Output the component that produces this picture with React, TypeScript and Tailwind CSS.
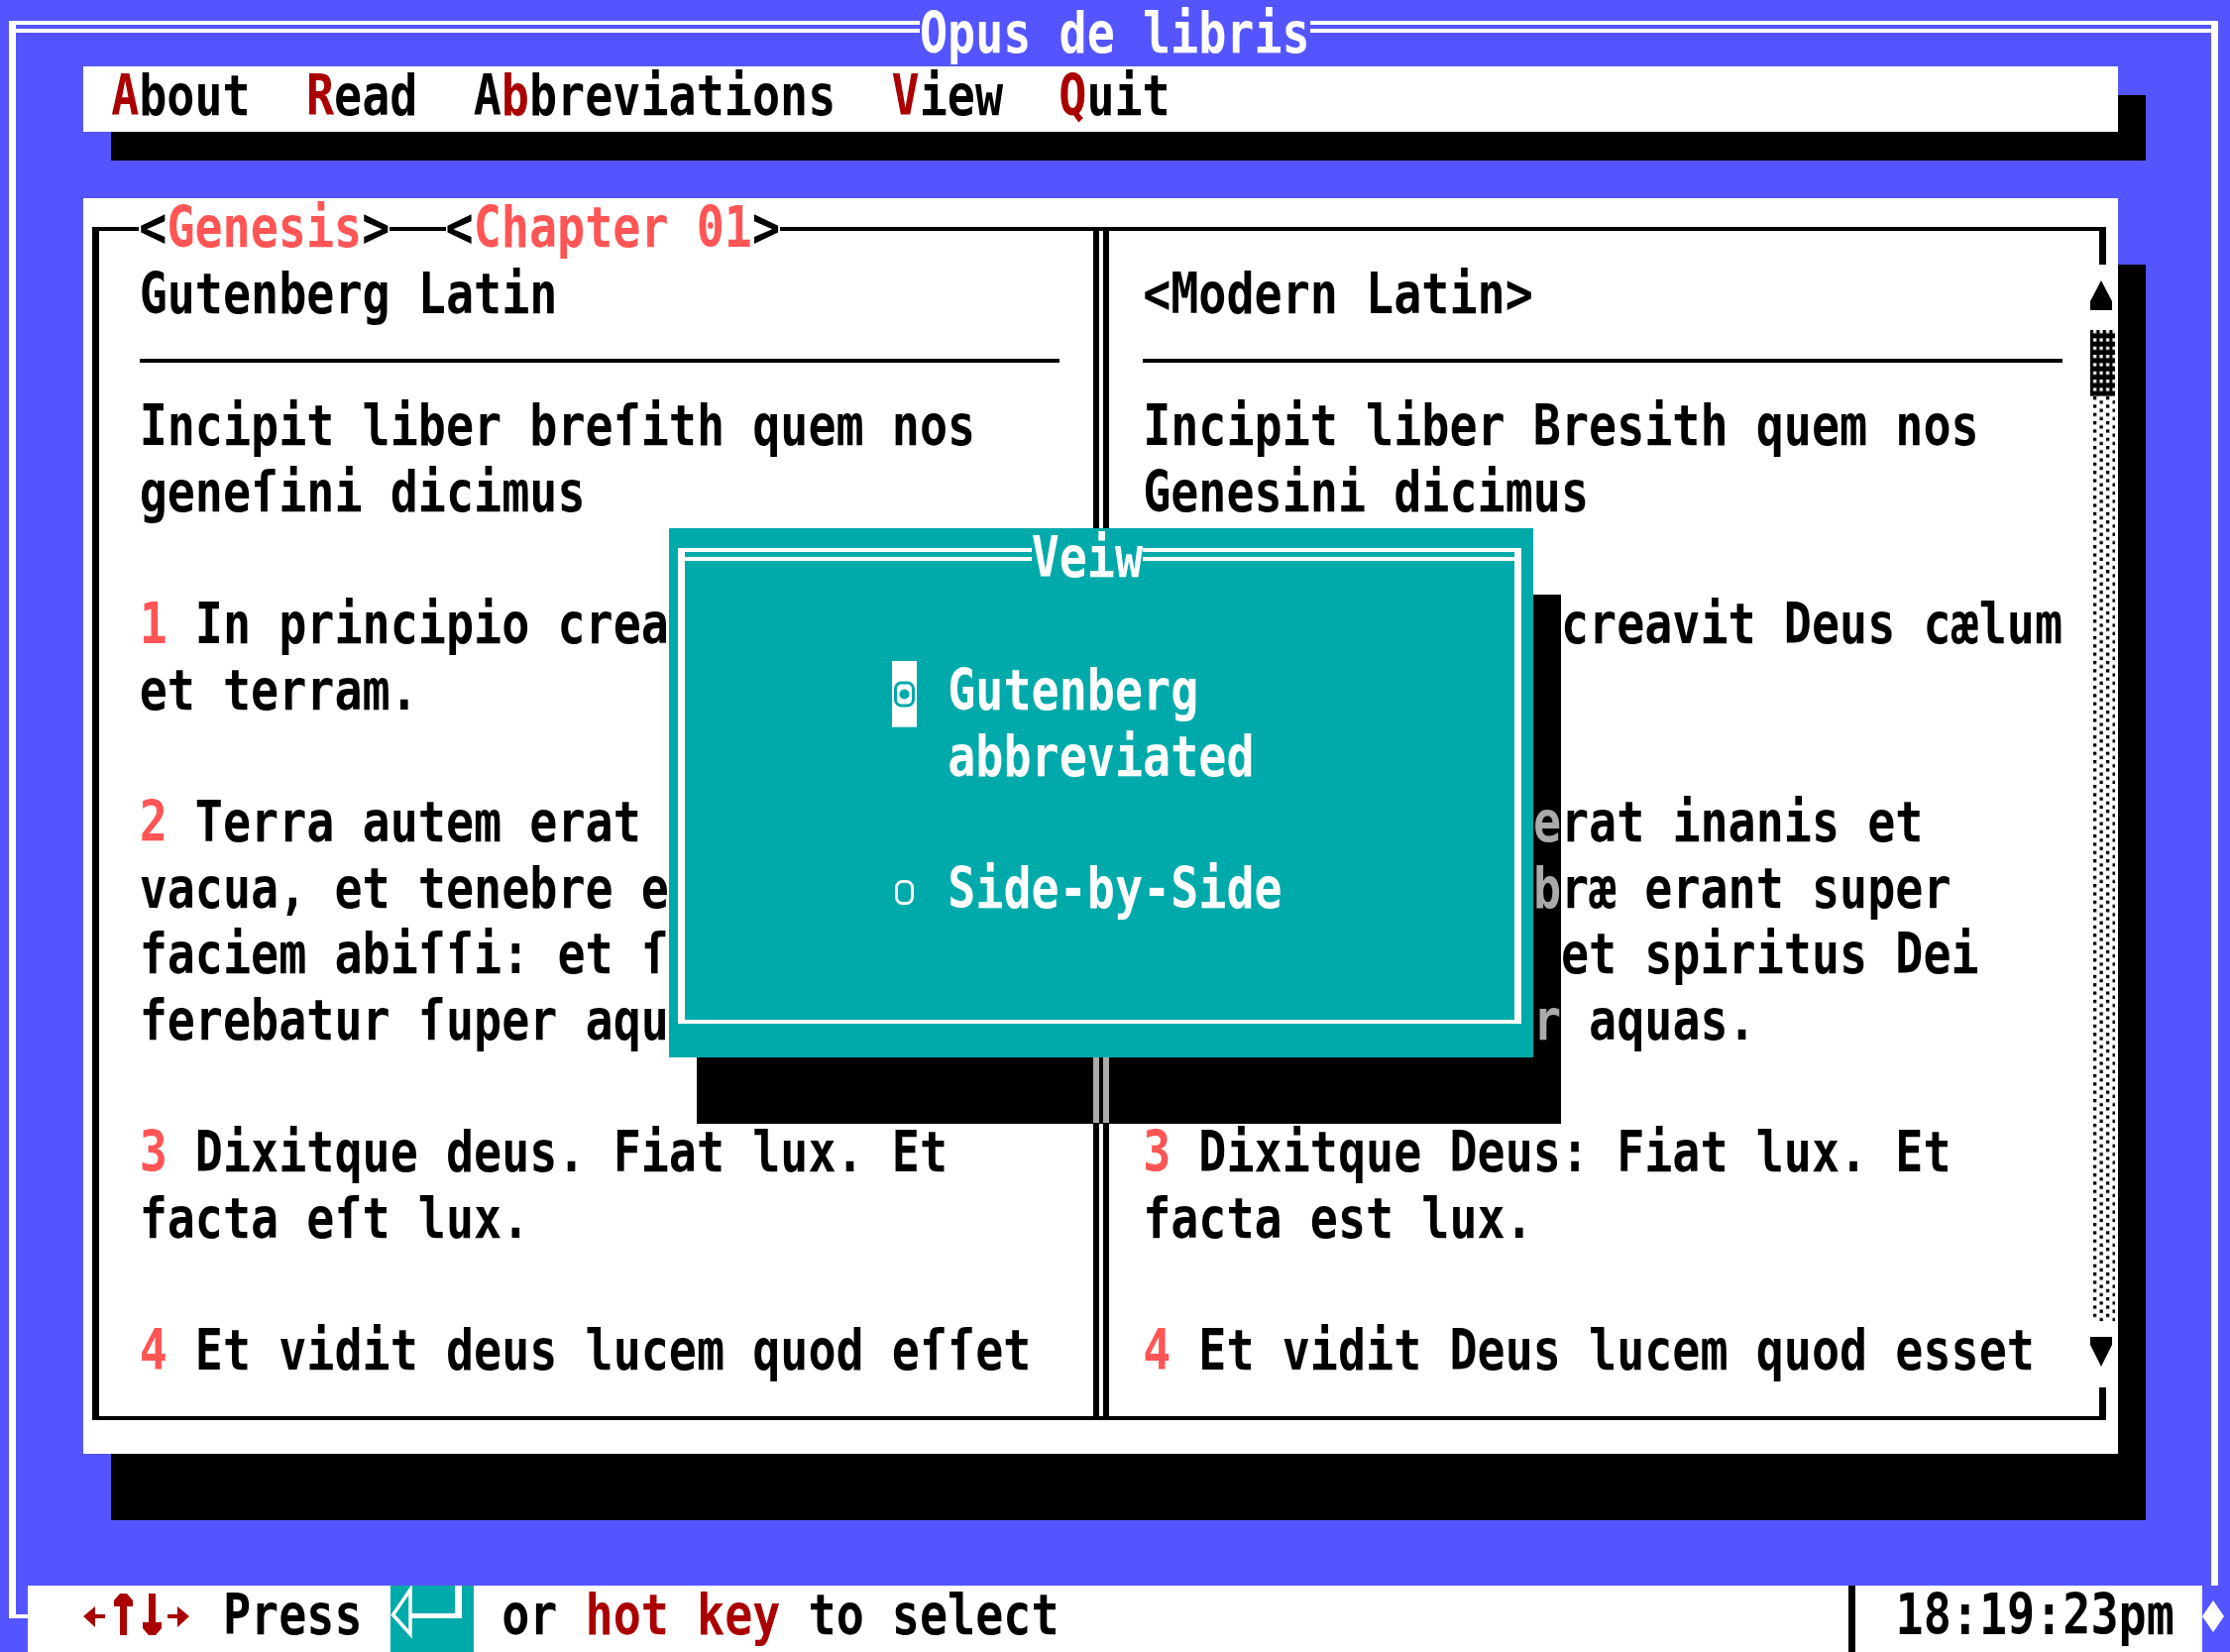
import type { ReactNode } from "react";

// DOS text-mode screen: 80x25 cells, each 28.125 x 66.68 px.

function Row({ children, className = "" }: { children?: ReactNode; className?: string }) {
  return (
    <div className={`h-[66.68px] whitespace-pre leading-[66.68px] ${className}`}>
      <span className="inline-block origin-[0_49.5px] scale-y-[1.2]">{children}</span>
    </div>
  );
}

function Verse({ n, text }: { n: string; text: string }) {
  return (
    <Row>
      <span className="text-[#ff5555]">{n}</span>
      {text}
    </Row>
  );
}

// a row whose 15th cell sits under the dialog shadow (drawn there in grey)
function Split({ before, after, n }: { before: string; after: string; n?: string }) {
  return (
    <div className="flex h-[66.68px]">
      <Row>
        {n && <span className="text-[#ff5555]">{n}</span>}
        {before}
      </Row>
      <div className="w-[28.125px] shrink-0" />
      <Row>{after}</Row>
    </div>
  );
}

function Rule() {
  return (
    <div className="h-[66.68px] pt-[28.3px]">
      <div className="w-[928.125px] border-t-4 border-black" />
    </div>
  );
}

function ScrollBar() {
  return (
    <div className="absolute left-[2025px] top-[66.68px] flex h-[1133.56px] w-[28.125px] flex-col bg-white">
      <svg className="h-[66.68px] w-[28.125px] shrink-0" viewBox="0 0 28.125 66.68">
        <polygon points="11,16 22,37 22,46 0,46 0,37" fill="black" />
      </svg>
      <svg className="h-[66.68px] w-[25px] shrink-0">
        <defs>
          <pattern id="thumb" width="6.5" height="8.34" patternUnits="userSpaceOnUse">
            <rect x="3" y="0" width="3.2" height="3.3" fill="white" />
          </pattern>
        </defs>
        <rect width="25" height="66.68" fill="black" />
        <rect width="25" height="66.68" fill="url(#thumb)" />
      </svg>
      <svg className="h-[933.52px] w-[25px] shrink-0">
        <defs>
          <pattern id="track" width="13" height="8.34" patternUnits="userSpaceOnUse">
            <rect x="3" y="0" width="3.3" height="3.3" fill="black" />
            <rect x="9.5" y="4.17" width="3.3" height="3.3" fill="black" />
          </pattern>
        </defs>
        <rect width="25" height="933.52" fill="url(#track)" />
      </svg>
      <svg className="h-[66.68px] w-[28.125px] shrink-0" viewBox="0 0 28.125 66.68">
        <polygon points="0,15 22,15 22,23 11,45 0,23" fill="black" />
      </svg>
    </div>
  );
}

export default function App() {
  return (
    <div className="relative h-[1667px] w-[2250px] overflow-hidden bg-[#5555ff] font-['DejaVu_Sans_Mono','Liberation_Mono',monospace] text-[46.715px] font-bold leading-[66.68px] text-black">
      {/* outer frame */}
      <div className="relative mt-[21px] mr-[12px] ml-[9px] h-[1579px] border-x-[7px] border-t-4 border-white">
        <div className="mt-[4px] border-t-4 border-white" />
        <div className="absolute top-[-21px] left-[912px] bg-[#5555ff] text-white">
          <Row>Opus de libris</Row>
        </div>

        {/* menu bar */}
        <div className="relative mt-[33.68px] ml-[68px] h-[66.68px] w-[2053px]">
          <div className="absolute top-[29px] left-[28px] h-full w-full bg-black" />
          <div className="relative h-full w-full bg-white">
            <Row>
              {" "}
              <span className="text-[#aa0000]">A</span>bout{"  "}
              <span className="text-[#aa0000]">R</span>ead{"  "}A
              <span className="text-[#aa0000]">b</span>breviations{"  "}
              <span className="text-[#aa0000]">V</span>iew{"  "}
              <span className="text-[#aa0000]">Q</span>uit
            </Row>
          </div>
        </div>

        {/* reading panel */}
        <div className="relative mt-[66.68px] ml-[68px] h-[1266.92px] w-[2053px]">
          <div className="absolute top-[66.68px] left-[28.125px] h-full w-full bg-black" />
          <div className="relative h-full w-full bg-white pt-[29px] pl-[9px]">
            <div className="flex h-[1204px] w-[2032px] border-x-[7px] border-y-4 border-black">
              <div className="w-[1003px] pt-[33.72px] pl-[40.625px]">
                <Row>Gutenberg Latin</Row>
                <Rule />
                <Row>Incipit liber breſith quem nos</Row>
                <Row>geneſini dicimus</Row>
                <Row />
                <Verse n="1" text=" In principio creavit deus celum" />
                <Row>et terram.</Row>
                <Row />
                <Verse n="2" text=" Terra autem erat inanis et" />
                <Row>vacua, et tenebre erant super</Row>
                <Row>faciem abiſſi: et ſpiritus domini</Row>
                <Row>ferebatur ſuper aquas.</Row>
                <Row />
                <Verse n="3" text=" Dixitque deus. Fiat lux. Et" />
                <Row>facta eſt lux.</Row>
                <Row />
                <Verse n="4" text=" Et vidit deus lucem quod eſſet" />
              </div>
              <div className="w-[16px] border-x-[6px] border-black" />
              <div className="flex-1 pt-[33.72px] pl-[34.125px]">
                <Row>{"<Modern Latin>"}</Row>
                <Rule />
                <Row>Incipit liber Bresith quem nos</Row>
                <Row>Genesini dicimus</Row>
                <Row />
                <Verse n="1" text=" In principio creavit Deus cælum" />
                <Row />
                <Row />
                <Split n="2" before=" Terra autem " after="rat inanis et" />
                <Split before="              " after="ræ erant super" />
                <Row>faciem abyssi: et spiritus Dei</Row>
                <Split before="ferebatur supe" after=" aquas." />
                <Row />
                <Verse n="3" text=" Dixitque Deus: Fiat lux. Et" />
                <Row>facta est lux.</Row>
                <Row />
                <Verse n="4" text=" Et vidit Deus lucem quod esset" />
              </div>
            </div>

            <div className="absolute top-0 left-[56.25px] flex">
              <Row className="bg-white">
                {"<"}
                <span className="text-[#ff5555]">Genesis</span>
                {">"}
              </Row>
              <div className="w-[56.25px]" />
              <Row className="bg-white">
                {"<"}
                <span className="text-[#ff5555]">Chapter 01</span>
                {">"}
              </Row>
            </div>

            <ScrollBar />
          </div>
        </div>
      </div>

      {/* status line */}
      <div className="flex h-[66.68px]">
        <div className="w-[28.125px] shrink-0">
          <div className="ml-[9px] h-[33px] w-[19.125px] border-b-4 border-l-[7px] border-white" />
        </div>
        <div className="flex flex-1 bg-white">
          <div className="w-[56.25px] shrink-0" />
          <svg className="h-[66.68px] w-[112.5px] shrink-0" viewBox="0 0 112.5 66.68" fill="#aa0000">
            <rect x="6" y="29" width="16" height="4" />
            <polygon points="0,31 12,21 12,42" />
            <rect x="37" y="14" width="7" height="36" />
            <polygon points="37,8 44,8 50,15 50,21 31,21 31,15" />
            <rect x="66" y="8" width="7" height="36" />
            <polygon points="60,37 79,37 79,43 73,50 66,50 60,43" />
            <rect x="85" y="29" width="16" height="4" />
            <polygon points="107,31 95,21 95,42" />
          </svg>
          <Row>{" Press "}</Row>
          <div className="w-[84.375px] shrink-0 bg-[#00aaaa]">
            <svg className="h-[66.68px] w-[84.375px]" viewBox="0 0 84.375 66.68">
              <path d="M20 4 L2.5 29.5 L20 49 Z" fill="none" stroke="white" strokeWidth="3.5" />
              <rect x="20" y="28" width="52" height="5" fill="white" />
              <rect x="65" y="0" width="7" height="33" fill="white" />
            </svg>
          </div>
          <Row>
            {" or "}
            <span className="text-[#aa0000]">hot key</span>
            {" to select"}
          </Row>
          <div className="ml-auto w-[28.125px] shrink-0">
            <div className="ml-[9px] h-full w-[7px] bg-black" />
          </div>
          <Row>{" 18:19:23pm "}</Row>
        </div>
        <div className="w-[28.125px] shrink-0">
          <svg className="h-[66.68px] w-[28.125px]" viewBox="0 0 28.125 66.68">
            <polygon points="11,15 22,31 11,47 0,31" fill="white" />
          </svg>
        </div>
      </div>

      {/* View dialog with its shadow */}
      <div className="absolute top-[600.12px] left-[703.125px] flex h-[533.44px] w-[871.875px] flex-col bg-black text-[#aaaaaa]">
        <div className="pl-[843.75px]">
          <Row />
          <Row />
          <Row />
          <Row>e</Row>
          <Row>b</Row>
          <Row />
          <Row>r</Row>
        </div>
        <div className="h-[66.68px]">
          <div className="ml-[400px] h-full w-[16px] border-x-[6px] border-[#aaaaaa]" />
        </div>
      </div>
      <div className="absolute top-[533.44px] left-[675px] h-[533.44px] w-[871.875px] bg-[#00aaaa] text-white">
        <div className="mt-[20px] ml-[9px] h-[480px] w-[851px] border-x-[7px] border-y-4 border-white">
          <div className="mt-[5px] border-t-4 border-white" />
          <div className="mt-[100.4px] ml-[209px]">
            <div className="flex">
              <svg className="h-[66.68px] w-[28.125px] shrink-0" viewBox="0 0 28.125 66.68">
                <rect width="25" height="66.68" fill="white" />
                <rect x="3.5" y="22" width="18" height="23" rx="6" fill="none" stroke="#00aaaa" strokeWidth="3" />
                <circle cx="12.5" cy="33.5" r="5" fill="#00aaaa" />
              </svg>
              <Row>{" Gutenberg"}</Row>
            </div>
            <Row>{"  abbreviated"}</Row>
            <Row />
            <div className="flex">
              <svg className="h-[66.68px] w-[28.125px] shrink-0" viewBox="0 0 28.125 66.68">
                <rect x="4.5" y="22.5" width="16" height="22" rx="6" fill="none" stroke="white" strokeWidth="3" />
              </svg>
              <Row>{" Side-by-Side"}</Row>
            </div>
          </div>
        </div>
        <div className="absolute top-0 left-[365.625px] bg-[#00aaaa]">
          <Row>Veiw</Row>
        </div>
      </div>
    </div>
  );
}
